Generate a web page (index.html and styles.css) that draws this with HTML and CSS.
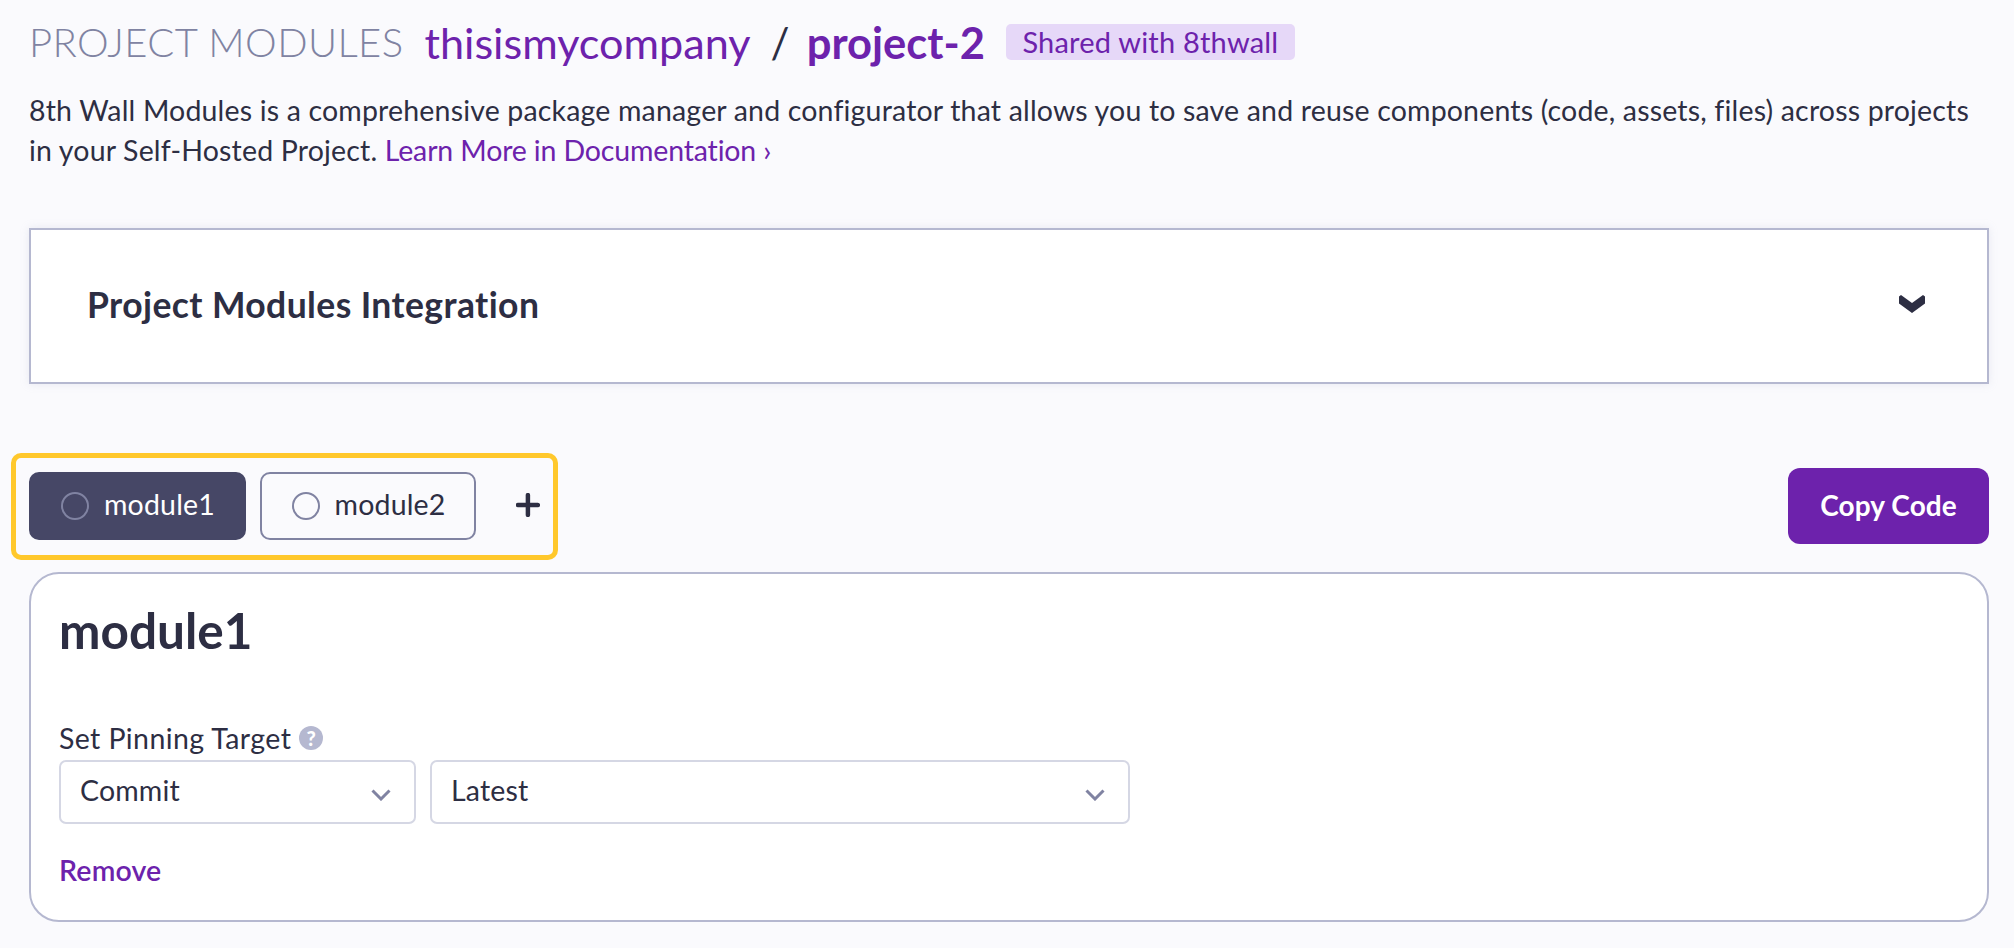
FILE: index.html
```html
<!DOCTYPE html>
<html lang="en">
<head>
<meta charset="utf-8">
<title>Project Modules</title>
<link rel="stylesheet" href="styles.css">
</head>
<body>
<main class="page">
  <header class="title-row">
    <span class="eyebrow">PROJECT MODULES</span>
    <a class="crumb">thisismycompany</a>
    <span class="slash">/</span>
    <a class="crumb crumb-strong">project-2</a>
    <span class="badge">Shared with 8thwall</span>
  </header>
  <p class="intro">8th Wall Modules is a comprehensive package manager and configurator that allows you to save and reuse components (code, assets, files) across projects in your Self-Hosted Project. <a class="link">Learn More in Documentation ›</a></p>

  <section class="panel">
    <h2 class="panel-title">Project Modules Integration</h2>
    <svg class="panel-chevron" viewBox="0 0 26 18" aria-hidden="true"><path d="M0 1.5 L2 0 L13 8 L24 0 L26 1.5 V8.5 L13 18 L0 8.5 Z"/></svg>
  </section>

  <div class="toolbar">
    <div class="tabs">
      <button class="tab tab-active"><span class="radio"></span><span class="tab-label">module1</span></button>
      <button class="tab"><span class="radio"></span><span class="tab-label">module2</span></button>
      <svg class="plus" viewBox="0 0 24 24" aria-hidden="true"><path d="M12 2V22M2 12H22"/></svg>
    </div>
    <button class="copy">Copy Code</button>
  </div>

  <section class="card">
    <h1 class="card-title">module1</h1>
    <div class="field-label">Set Pinning Target <span class="help">?</span></div>
    <div class="selects">
      <div class="select select-type"><span class="select-text">Commit</span><svg class="select-chevron" viewBox="0 0 20 12" aria-hidden="true"><path d="M1.5 1.5L10 10L18.5 1.5"/></svg></div>
      <div class="select select-value"><span class="select-text">Latest</span><svg class="select-chevron" viewBox="0 0 20 12" aria-hidden="true"><path d="M1.5 1.5L10 10L18.5 1.5"/></svg></div>
    </div>
    <a class="remove">Remove</a>
  </section>
</main>
</body>
</html>
```

FILE: styles.css
```css
* { box-sizing: border-box; }
html, body { margin: 0; height: 100%; }
body {
  background: #fafafd;
  color: #2d2e43;
  font-family: "Lato", "Noto Sans", sans-serif;
  font-size: 28.5px;
  letter-spacing: 0.17px;
  overflow: hidden;
}
.page { padding: 18px 25px 0 29px; }

.title-row { display: flex; align-items: center; height: 48px; }
.eyebrow { font-size: 40px; font-weight: 300; color: #8083a2; letter-spacing: 0.4px; }
.crumb { font-size: 43.2px; color: #6d22ac; margin-left: 21px; letter-spacing: 0; }
.crumb-strong { font-size: 43.5px; font-weight: 700; margin-left: 17px; }
.slash { font-size: 42px; margin-left: 20px; }
.badge {
  margin-left: 21px;
  height: 36px;
  line-height: 35px;
  padding: 0 16.5px;
  background: #e6d8f8;
  color: #6d22ac;
  border-radius: 5px;
  font-size: 29px;
  letter-spacing: 0.2px;
}

.intro { margin: 24px 0 0; line-height: 40px; }
.link { color: #6d22ac; letter-spacing: -0.15px; }

.panel {
  margin-top: 58px;
  height: 156px;
  background: #fff;
  border: 2.5px solid #b5b8d0;
  box-shadow: 0 0 8px rgba(181, 184, 208, 0.25);
  display: flex;
  align-items: center;
  justify-content: space-between;
  padding: 0 62px 5px 56px;
}
.panel-title { margin: 0; font-size: 35.5px; font-weight: 700; letter-spacing: 0.4px; padding-top: 2px; }
.panel-chevron { width: 26px; height: 18px; fill: #2d2e43; }

.toolbar {
  margin-top: 69px;
  display: flex;
  align-items: center;
  justify-content: space-between;
}
.tabs {
  margin-left: -18px;
  width: 547px;
  height: 107px;
  padding: 0 13px;
  border: 5px solid #ffc82c;
  border-radius: 10px;
  display: flex;
  align-items: center;
}
.tab {
  width: 218px;
  height: 68px;
  margin-right: 14px;
  margin-bottom: 1px;
  padding: 0 0 0 30px;
  display: flex;
  align-items: center;
  gap: 15px;
  background: transparent;
  border: 2px solid #8083a2;
  border-radius: 10px;
  color: #2d2e43;
  font: inherit;
  letter-spacing: inherit;
}
.tab-active { background: #464766; border-color: #464766; color: #fff; }
.tab-label { margin-top: -4px; }
.radio { width: 28px; height: 28px; border: 2px solid #8083a2; border-radius: 50%; }
.plus { width: 24px; height: 24px; margin-left: 26px; margin-bottom: 3px; fill: none; stroke: #2d2e43; stroke-width: 4.5; stroke-linecap: round; }
.copy {
  width: 201px;
  height: 76px;
  margin-bottom: 2px;
  padding: 0 0 2px;
  background: #6d22ac;
  color: #fff;
  border: 0;
  border-radius: 12px;
  font: 700 28px "Lato", sans-serif;
  letter-spacing: 0.1px;
}

.card {
  margin-top: 12px;
  height: 350px;
  padding: 26px 28px 0;
  background: #fff;
  border: 2.5px solid #b5b8d0;
  border-radius: 30px;
}
.card-title { margin: 0; height: 60px; line-height: 60px; font-size: 49.5px; font-weight: 700; letter-spacing: 0; }
.field-label { margin-top: 63px; height: 30px; line-height: 30px; display: flex; align-items: center; gap: 8px; letter-spacing: 0.4px; }
.help {
  width: 24px;
  height: 24px;
  border-radius: 50%;
  background: #b5b8d0;
  color: #fff;
  font-size: 20px;
  font-weight: 900;
  line-height: 24px;
  text-align: center;
  letter-spacing: 0;
}
.selects { margin-top: 7px; display: flex; gap: 14px; }
.select {
  height: 64px;
  padding: 0 23px 0 19px;
  background: #fff;
  border: 2.5px solid #d5d7e4;
  border-radius: 7px;
  display: flex;
  align-items: center;
  justify-content: space-between;
}
.select-type { width: 357px; }
.select-value { width: 700px; }
.select-text { margin-top: -4px; }
.select-chevron { width: 20px; height: 12px; margin-top: 5px; fill: none; stroke: #8083a2; stroke-width: 3; }
.remove { display: block; margin-top: 30px; line-height: 32px; color: #6d22ac; font-weight: 600; }
```
